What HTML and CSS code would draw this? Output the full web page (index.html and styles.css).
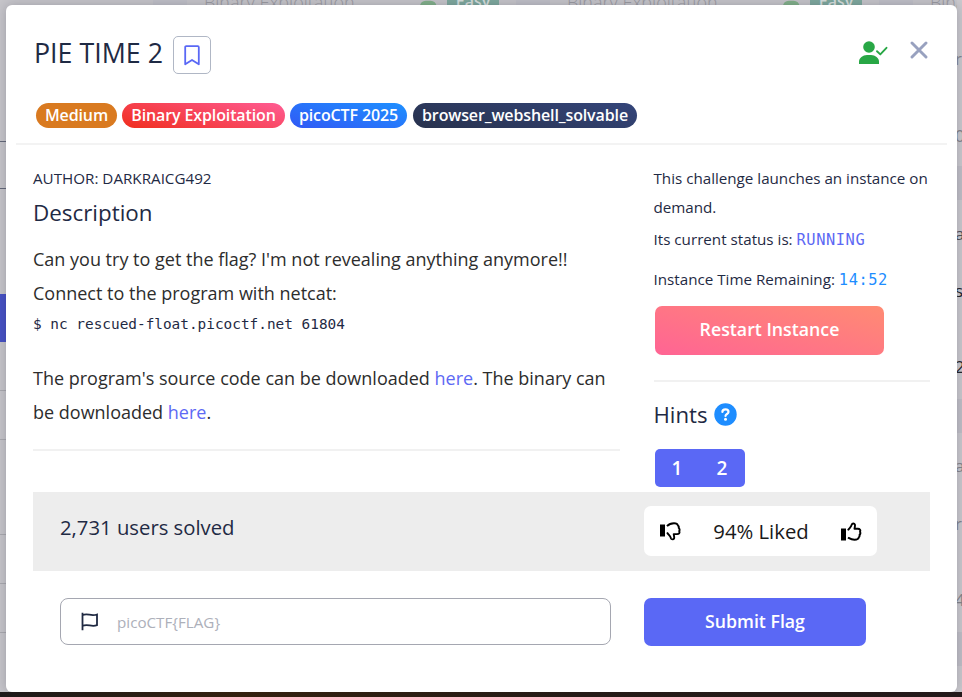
FILE: index.html
```html
<!DOCTYPE html>
<html lang="en">
<head>
<meta charset="utf-8">
<title>PIE TIME 2</title>
<link rel="stylesheet" href="styles.css">
</head>
<body>
<div class="page">
  <div class="cards">
    <div class="cell"><span class="cat">Binary Exploitation</span><svg class="mini" viewBox="0 0 28 24"><circle cx="10" cy="6" r="6"/><path d="M0 24v-3a7 7 0 0 1 7-7h6a7 7 0 0 1 7 7v3z"/></svg><span class="easy">Easy</span></div>
    <div class="cell"><span class="cat">Binary Exploitation</span><svg class="mini" viewBox="0 0 28 24"><circle cx="10" cy="6" r="6"/><path d="M0 24v-3a7 7 0 0 1 7-7h6a7 7 0 0 1 7 7v3z"/></svg><span class="easy">Easy</span></div>
    <div class="cell"><span class="cat">Binary</span></div>
  </div>
  <div class="rail">
    <i class="r1"></i><i class="r2"></i><i class="r3"></i><i class="r4"></i><i class="r4"></i><i class="r4"></i><i class="r5"></i><i class="r4"></i><i class="r4"></i>
  </div>
  <div class="edge">
    <span class="e1">rr</span><span class="e2">0</span><i></i><span class="e3">a</span><span class="e4">s</span><span class="e5">2</span><i></i><span class="e6">a</span><span class="e7">rr</span><span class="e8">4</span><i></i>
  </div>
  <div class="taskbar"></div>
</div>
<main class="modal">
  <header class="head">
    <div class="title-row">
      <h1>PIE TIME 2</h1>
      <button class="bookmark" aria-label="Bookmark"><svg width="16" height="21" viewBox="0 0 16 21"><path d="M1.2 2.2a1 1 0 0 1 1-1h11.6a1 1 0 0 1 1 1V19.3L8 15 1.2 19.3z" fill="none" stroke="#5a68f5" stroke-width="1.8" stroke-linejoin="round"/></svg></button>
      <svg class="user" width="29" height="24" viewBox="0 0 29 24"><circle cx="10" cy="6" r="5.8" fill="#28a745"/><path d="M0 23v-2.3C0 17 3.800 14 8 14h4c4.200 0 8 3 8 6.700V23z" fill="#28a745"/><path d="M18 10.200l3.300 3.200 6.200-6.600" fill="none" stroke="#28a745" stroke-width="1.900" stroke-linecap="round" stroke-linejoin="round"/></svg>
      <svg class="close" width="18" height="18" viewBox="0 0 18 18"><path d="M2 2l14 14M16 2L2 16" stroke="#98a1bf" stroke-width="2.900" stroke-linecap="round"/></svg>
    </div>
    <div class="tags">
      <span class="tag medium">Medium</span><span class="tag binary">Binary Exploitation</span><span class="tag pico">picoCTF 2025</span><span class="tag shell">browser_webshell_solvable</span>
    </div>
  </header>
  <div class="columns">
    <section class="left">
      <p class="author">AUTHOR: DARKRAICG492</p>
      <h2>Description</h2>
      <p class="text t1">Can you try to get the flag? I'm not revealing anything anymore!!</p>
      <p class="text t2">Connect to the program with netcat:</p>
      <code>$ nc rescued-float.picoctf.net 61804</code>
      <p class="text t3">The program's source code can be downloaded <a>here</a>. The binary can<br>be downloaded <a>here</a>.</p>
      <hr>
    </section>
    <section class="right">
      <p class="info">This challenge launches an instance on<br>demand.</p>
      <p class="status">Its current status is: <span class="mono run">RUNNING</span></p>
      <p class="remain">Instance Time Remaining: <span class="mono time">14:52</span></p>
      <button class="restart">Restart Instance</button>
      <hr>
      <h3>Hints <svg width="23" height="23" viewBox="0 0 23 23"><circle cx="11.500" cy="11.500" r="11.200" fill="#1e8dff"/><path d="M8.400 9C8.400 5.400 14.500 5.500 14.500 8.900 14.500 11 11.500 11 11.500 13" fill="none" stroke="#fff" stroke-width="2.200" stroke-linecap="round"/><circle cx="11.500" cy="16.300" r="1.500" fill="#fff"/></svg></h3>
      <div class="hints"><button>1</button><button>2</button></div>
    </section>
  </div>
  <div class="solved">
    <span class="count">2,731 users solved</span>
    <div class="liked">
      <svg width="21" height="19" viewBox="0 0 21 19"><path d="M0 2.500h5v12H0z"/><path d="M7 4.200C9 2 11 1.200 14 1.200c2 0 3.500.5 3.900 2.200.9.700 1.100 1.600.8 2.500 1.100 1.100 1.100 2.200.5 3.200 1 2-.5 3-2 3h-3.500c.2 1.500.8 3.200.4 4.300-.5 1.300-2.700 1.400-3.200-.2-.3-2.200-2.300-3.300-3.500-5.200L7 10.500" fill="none" stroke="#000" stroke-width="1.900" stroke-linejoin="round"/></svg>
      <span>94% Liked</span>
      <svg width="21" height="19" viewBox="0 0 21 19"><path d="M0 6.500h5v12H0z"/><path d="M7 15.500c2 1.200 3.500 2.300 6.500 2.300 2.500 0 4-.5 4.200-2.300.9-.7 1.100-1.600.8-2.500 1.100-1.100 1.100-2.200.5-3.200 1-2-.5-3-2-3h-3.500c.2-1.500.8-3.200.4-4.300-.5-1.300-2.700-1.400-3.200.2-.3 2.200-2.300 3.300-3.500 5.200L7 8.400" fill="none" stroke="#000" stroke-width="1.900" stroke-linejoin="round"/></svg>
    </div>
  </div>
  <div class="submit">
    <div class="field"><svg width="18" height="19" viewBox="0 0 18 19"><path d="M1.500.8v17.400M1.500 3.200c5-2.600 8 1.500 14.500-.7v10.700c-6 2.400-9-2-14.500.7" fill="none" stroke="#1f2942" stroke-width="1.800"/></svg><span>picoCTF{FLAG}</span></div>
    <button>Submit Flag</button>
  </div>
</main>
</body>
</html>
```

FILE: styles.css
```css
* { box-sizing: border-box; margin: 0; padding: 0; }
body { width: 962px; height: 697px; overflow: hidden; position: relative; font-family: "Open Sans", "Noto Sans", sans-serif; color: #1f2a44; background: #c6c5ca; }
button { border: 0; font-family: inherit; display: block; }
hr { border: 0; height: 2px; background: #f1f1f1; }
a { color: #5d69f4; }

.page { position: absolute; inset: 0; overflow: hidden; }
.cards { position: absolute; left: 153px; top: -12px; display: flex; }
.cell { width: 363px; height: 24px; display: flex; align-items: flex-start; border-left: 34px solid #c0c0c8; padding-left: 17px; font-size: 18px; line-height: 28px; color: #9b9ba2; white-space: nowrap; }
.cat { width: 216px; font-weight: 300; }
.mini { width: 23px; height: 20px; margin-top: 1px; fill: #83b18b; }
.easy { width: 52px; margin-left: 4px; text-align: center; background: #7fa99f; color: #d7dfdd; border-radius: 10px; font-weight: 600; font-size: 16px; line-height: 27px; }
.rail { position: absolute; left: 0; top: 0; width: 6px; display: flex; flex-direction: column; }
.rail i { display: block; border-bottom: 1px solid #a9a9af; }
.rail .r1 { height: 142px; border-color: #64697a; }
.rail .r2 { height: 47px; border-color: #64697a; }
.rail .r3 { height: 105px; border: 0; }
.rail .r4 { height: 49px; }
.rail .r4:nth-child(4) { height: 48px; background: #4752c4; border: 0; }
.rail .r5 { height: 95px; }
.edge { position: absolute; left: 957px; top: 0; width: 5px; height: 692px; overflow: hidden; display: flex; flex-direction: column; font-size: 17px; line-height: 20px; color: #85858d; background: #cac9ce; }
.edge span { display: block; height: 20px; margin-left: -2px; }
.edge i { display: block; flex: none; height: 34px; background: #c0bfc7; }
.edge .e1 { margin-top: 49px; }
.edge .e2 { margin-top: 57px; }
.edge .e2 + i { margin-top: 20px; }
.edge .e3 { margin-top: 24px; color: #50505a; }
.edge .e4 { margin-top: 37px; color: #25252c; }
.edge .e5 { margin-top: 56px; color: #25252c; }
.edge .e5 + i { margin-top: 22px; }
.edge .e6 { margin-top: 23px; }
.edge .e7 { margin-top: 38px; }
.edge .e8 { margin-top: 56px; }
.edge .e8 + i { margin-top: 22px; }
.taskbar { position: absolute; left: 0; right: 0; bottom: 0; height: 5px; background: linear-gradient(90deg, #1d1a1a, #34210f 25%, #251b17 60%, #241a1b); }

.modal { position: absolute; left: 6px; top: 5px; width: 951px; height: 687px; background: #fff; border-radius: 6px; box-shadow: 0 0 12px rgba(20, 20, 35, .22); clip-path: inset(-5px -5px 0 -6px); }
.head { height: 140px; margin: 0 10px; padding: 31px 0 0 18px; border-bottom: 2px solid #f3f3f3; }
.title-row { display: flex; height: 38px; }
h1 { width: 139px; font-size: 26.800px; font-weight: 400; line-height: 33px; white-space: nowrap; }
.bookmark { width: 38px; height: 38px; border: 1px solid #b0b7c5; border-radius: 5px; background: #fff; display: grid; place-items: center; }
.user { margin: 5px 0 0 648px; flex: none; }
.close { margin: 5px 0 0 22px; flex: none; }
.tags { display: flex; margin: 29px 0 0 2px; }
.tag { height: 25px; border-radius: 13px; color: #fff; font-size: 16px; font-weight: 600; letter-spacing: -.12px; line-height: 24.500px; text-align: center; white-space: nowrap; }
.medium { width: 81px; background: #d97a20; }
.binary { width: 163px; margin-left: 5px; background: linear-gradient(15deg, #f02d1d, #ff5c94); }
.pico { width: 117px; margin-left: 5px; background: linear-gradient(15deg, #3159f5, #1e90ff); }
.shell { width: 224px; margin-left: 6px; background: linear-gradient(15deg, #28324d, #34457a); }

.columns { display: flex; height: 347px; padding-left: 27px; }
.left { width: 587px; margin-right: 33.500px; padding-top: 21px; }
.right { width: 276.500px; padding-top: 19px; }
.left p, .right p { white-space: nowrap; }
.author { font-size: 15.200px; line-height: 24px; }
h2 { font-size: 22.400px; font-weight: 400; line-height: 32px; margin-top: 7px; }
.text { font-size: 18px; line-height: 34px; color: #2d2d2d; }
.t1 { margin-top: 13px; }
code { display: block; font: 14.4px/22px "DejaVu Sans Mono", monospace; margin-top: 3px; }
.t3 { margin-top: 26px; }
.left hr { margin-top: 20px; }
.info, .status, .remain { font-size: 15.200px; line-height: 29px; }
.info { letter-spacing: -.01px; }
.status { margin-top: 3px; }
.remain { margin-top: 11px; }
.mono { font-family: "DejaVu Sans Mono", monospace; font-size: 15.400px; letter-spacing: .54px; line-height: 20px; }
.run { color: #5d69f4; }
.time { color: #1e8dff; }
.restart { width: 229px; height: 49px; margin: 12px 0 0 1.500px; border-radius: 7px; background: linear-gradient(15deg, #ff6494, #ff8b73); color: #fff; font-size: 17.750px; font-weight: 600; padding-bottom: 3px; }
.right hr { margin-top: 25px; }
h3 { display: flex; align-items: center; gap: 6px; height: 32px; margin-top: 16px; font-size: 22.200px; font-weight: 400; }
.hints { display: flex; width: 90px; height: 38px; margin: 19px 0 0 1.500px; background: #5a68f5; border-radius: 5px; }
.hints button { width: 45px; padding-right: 1px; background: none; color: #fff; font-size: 19px; font-weight: 600; }

.solved { display: flex; width: 897px; height: 79px; margin-left: 27px; padding: 14px 0 0 27px; background: #ededed; }
.count { width: 584px; font-size: 20.300px; line-height: 42px; }
.liked { width: 233px; height: 50px; background: #fff; border-radius: 7px; display: flex; align-items: center; justify-content: space-between; padding: 0 15px 0 16px; color: #191919; font-size: 20.300px; }
.submit { display: flex; margin: 27px 0 0 54px; }
.field { width: 551px; height: 47px; border: 1px solid #a5a7b1; border-radius: 8px; display: flex; align-items: center; padding-left: 20px; gap: 18px; font-size: 15.200px; color: #adb0ba; }
.submit button { width: 222px; height: 48px; margin-left: 33px; border-radius: 7px; background: #5a68f5; color: #fff; font-size: 17.700px; font-weight: 600; padding-bottom: 3px; }
```
